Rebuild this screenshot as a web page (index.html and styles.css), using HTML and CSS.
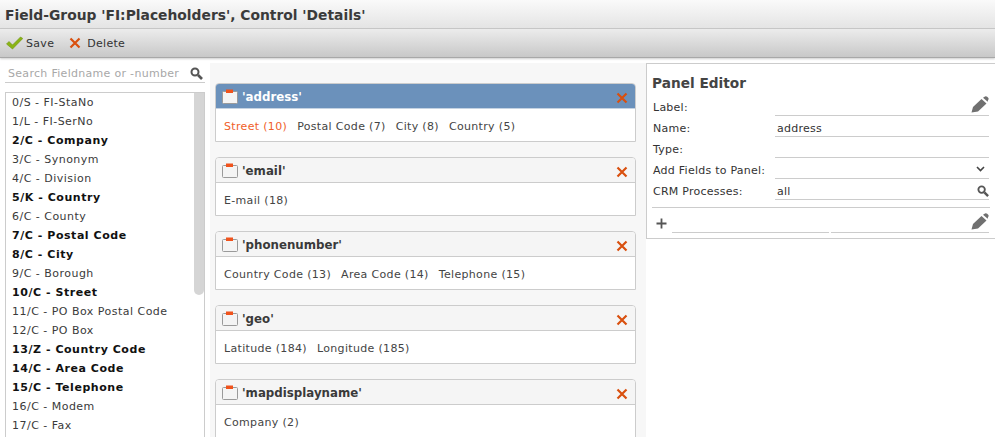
FILE: index.html
```html
<!DOCTYPE html>
<html lang="en">
<head>
    <meta charset="UTF-8">
    <title>Field-Group FI:Placeholders</title>
    <link rel="stylesheet" href="styles.css">
</head>
<body>
    <div class="title-bar">Field-Group 'FI:Placeholders', Control 'Details'</div>

    <div class="toolbar">
        <span class="tool">
            <svg class="tool-icon" width="17" height="14" viewBox="0 0 17 14"><path d="M0.5 8 L3 5.5 L6.5 9 L14.5 1 L16.8 2.5 L6.5 13 Z" fill="#8ab414" stroke="#6f9410" stroke-width="0.6"/></svg>
            Save
        </span>
        <span class="tool delete">
            <svg class="tool-icon" width="12" height="12" viewBox="0 0 12 12"><path d="M1.5 1.5 L10.5 10.5 M10.5 1.5 L1.5 10.5" stroke="#d9500f" stroke-width="2.2"/></svg>
            Delete
        </span>
    </div>

    <div class="main">
        <div class="fields">
            <div class="search">
                <span class="search-text">Search Fieldname or -number</span>
                <svg width="13" height="13" viewBox="0 0 13 13"><circle cx="5" cy="5" r="3.5" fill="none" stroke="#555" stroke-width="2"/><path d="M8 8 L12 12" stroke="#555" stroke-width="2.6"/></svg>
            </div>
            <div class="field-list">
                <div class="scroll-thumb"></div>
                <div class="field">0/S - FI-StaNo</div>
                <div class="field">1/L - FI-SerNo</div>
                <div class="field used">2/C - Company</div>
                <div class="field">3/C - Synonym</div>
                <div class="field">4/C - Division</div>
                <div class="field used">5/K - Country</div>
                <div class="field">6/C - County</div>
                <div class="field used">7/C - Postal Code</div>
                <div class="field used">8/C - City</div>
                <div class="field">9/C - Borough</div>
                <div class="field used">10/C - Street</div>
                <div class="field">11/C - PO Box Postal Code</div>
                <div class="field">12/C - PO Box</div>
                <div class="field used">13/Z - Country Code</div>
                <div class="field used">14/C - Area Code</div>
                <div class="field used">15/C - Telephone</div>
                <div class="field">16/C - Modem</div>
                <div class="field">17/C - Fax</div>
            </div>
        </div>

        <div class="panels">
            <div class="panel selected">
                <div class="panel-head">
                    <svg class="panel-icon" width="16" height="16" viewBox="0 0 16 16"><rect x="0.5" y="2.5" width="15" height="12" rx="1" fill="#f4f4f4" stroke="#9a9a9a"/><rect x="4" y="0.5" width="7" height="3.5" fill="#f0531c"/></svg>
                    <span class="panel-name">'address'</span>
                    <svg class="panel-del" width="12" height="12" viewBox="0 0 12 12"><path d="M1.5 1.5 L10.5 10.5 M10.5 1.5 L1.5 10.5" stroke="#d9500f" stroke-width="2.2"/></svg>
                </div>
                <div class="panel-body"><span class="active">Street (10)</span><span>Postal Code (7)</span><span>City (8)</span><span>Country (5)</span></div>
            </div>
            <div class="panel">
                <div class="panel-head">
                    <svg class="panel-icon" width="16" height="16" viewBox="0 0 16 16"><rect x="0.5" y="2.5" width="15" height="12" rx="1" fill="#f4f4f4" stroke="#9a9a9a"/><rect x="4" y="0.5" width="7" height="3.5" fill="#f0531c"/></svg>
                    <span class="panel-name">'email'</span>
                    <svg class="panel-del" width="12" height="12" viewBox="0 0 12 12"><path d="M1.5 1.5 L10.5 10.5 M10.5 1.5 L1.5 10.5" stroke="#d9500f" stroke-width="2.2"/></svg>
                </div>
                <div class="panel-body"><span>E-mail (18)</span></div>
            </div>
            <div class="panel">
                <div class="panel-head">
                    <svg class="panel-icon" width="16" height="16" viewBox="0 0 16 16"><rect x="0.5" y="2.5" width="15" height="12" rx="1" fill="#f4f4f4" stroke="#9a9a9a"/><rect x="4" y="0.5" width="7" height="3.5" fill="#f0531c"/></svg>
                    <span class="panel-name">'phonenumber'</span>
                    <svg class="panel-del" width="12" height="12" viewBox="0 0 12 12"><path d="M1.5 1.5 L10.5 10.5 M10.5 1.5 L1.5 10.5" stroke="#d9500f" stroke-width="2.2"/></svg>
                </div>
                <div class="panel-body"><span>Country Code (13)</span><span>Area Code (14)</span><span>Telephone (15)</span></div>
            </div>
            <div class="panel">
                <div class="panel-head">
                    <svg class="panel-icon" width="16" height="16" viewBox="0 0 16 16"><rect x="0.5" y="2.5" width="15" height="12" rx="1" fill="#f4f4f4" stroke="#9a9a9a"/><rect x="4" y="0.5" width="7" height="3.5" fill="#f0531c"/></svg>
                    <span class="panel-name">'geo'</span>
                    <svg class="panel-del" width="12" height="12" viewBox="0 0 12 12"><path d="M1.5 1.5 L10.5 10.5 M10.5 1.5 L1.5 10.5" stroke="#d9500f" stroke-width="2.2"/></svg>
                </div>
                <div class="panel-body"><span>Latitude (184)</span><span>Longitude (185)</span></div>
            </div>
            <div class="panel">
                <div class="panel-head">
                    <svg class="panel-icon" width="16" height="16" viewBox="0 0 16 16"><rect x="0.5" y="2.5" width="15" height="12" rx="1" fill="#f4f4f4" stroke="#9a9a9a"/><rect x="4" y="0.5" width="7" height="3.5" fill="#f0531c"/></svg>
                    <span class="panel-name">'mapdisplayname'</span>
                    <svg class="panel-del" width="12" height="12" viewBox="0 0 12 12"><path d="M1.5 1.5 L10.5 10.5 M10.5 1.5 L1.5 10.5" stroke="#d9500f" stroke-width="2.2"/></svg>
                </div>
                <div class="panel-body"><span>Company (2)</span></div>
            </div>
        </div>

        <div class="editor">
            <h2>Panel Editor</h2>
            <div class="editor-row">
                <span class="editor-label">Label:</span>
                <span class="editor-value">
                    <svg class="editor-icon" width="18" height="17" viewBox="0 0 18 17"><path d="M0.5 16.5 L2 11 L10.5 3 L15.5 7.5 L7 15.5 Z M12 1.8 L14 0.4 Q15.2 -0.2 16.2 0.8 L17.4 2 Q18 3 17 4.2 L16.7 5.8 Z" fill="#707070"/></svg>
                </span>
            </div>
            <div class="editor-row">
                <span class="editor-label">Name:</span>
                <span class="editor-value">address</span>
            </div>
            <div class="editor-row">
                <span class="editor-label">Type:</span>
                <span class="editor-value"></span>
            </div>
            <div class="editor-row">
                <span class="editor-label">Add Fields to Panel:</span>
                <span class="editor-value">
                    <svg class="editor-icon chevron" width="9" height="6" viewBox="0 0 9 6"><path d="M1 1 L4.5 4.5 L8 1" fill="none" stroke="#444" stroke-width="1.6"/></svg>
                </span>
            </div>
            <div class="editor-row">
                <span class="editor-label">CRM Processes:</span>
                <span class="editor-value">all
                    <svg class="editor-icon" width="12" height="12" viewBox="0 0 13 13"><circle cx="5" cy="5" r="3.5" fill="none" stroke="#555" stroke-width="2"/><path d="M8 8 L12 12" stroke="#555" stroke-width="2.6"/></svg>
                </span>
            </div>
            <div class="add-row">
                <svg class="plus" width="11" height="11" viewBox="0 0 11 11"><path d="M5.5 0.5 V10.5 M0.5 5.5 H10.5" stroke="#555" stroke-width="1.8"/></svg>
                <span class="add-input"></span>
                <span class="add-input last">
                    <svg class="editor-icon" width="18" height="17" viewBox="0 0 18 17"><path d="M0.5 16.5 L2 11 L10.5 3 L15.5 7.5 L7 15.5 Z M12 1.8 L14 0.4 Q15.2 -0.2 16.2 0.8 L17.4 2 Q18 3 17 4.2 L16.7 5.8 Z" fill="#707070"/></svg>
                </span>
            </div>
        </div>
    </div>
</body>
</html>
```

FILE: styles.css
```css
html, body {
    height: 100%;
}

body {
    margin: 0;
    font-family: "DejaVu Sans", Verdana, sans-serif;
    font-size: 11px;
    color: #333;
    background: #fff;
    display: flex;
    flex-direction: column;
    overflow: hidden;
}

.title-bar {
    height: 29px;
    line-height: 30px;
    padding-left: 5px;
    box-sizing: border-box;
    font-size: 13.85px;
    font-weight: bold;
    color: #3a3a3a;
    white-space: nowrap;
    background: linear-gradient(#fafafa, #e4e4e4);
    border-bottom: 1px solid #c9c9c9;
}

.toolbar {
    height: 29px;
    box-sizing: border-box;
    display: flex;
    align-items: center;
    gap: 15px;
    padding-left: 6px;
    letter-spacing: 0.3px;
    background: linear-gradient(#ececec, #c8c8c8);
    border-bottom: 1px solid #a8a8a8;
    box-shadow: 0 1px 2px rgba(0, 0, 0, 0.2);
    position: relative;
}

.tool {
    display: flex;
    align-items: center;
    gap: 3px;
}

.tool.delete {
    gap: 6px;
}

/* main columns */
.main {
    flex: 1;
    display: flex;
    min-height: 0;
}

.fields {
    width: 205px;
    flex-shrink: 0;
    padding: 8px 0 0 5px;
    box-sizing: border-box;
    display: flex;
    flex-direction: column;
}

.search {
    height: 17px;
    display: flex;
    align-items: center;
    justify-content: space-between;
    padding: 0 2px 1px 3px;
    box-sizing: border-box;
    border-bottom: 1px solid #ccc;
    margin-bottom: 9px;
}

.search-text {
    color: #a8a8a8;
    letter-spacing: 0.3px;
}

.field-list {
    flex: 1;
    position: relative;
    border: 1px solid #ccc;
    border-bottom: none;
    overflow: hidden;
}

.scroll-thumb {
    position: absolute;
    top: 0;
    right: 0;
    width: 10px;
    height: 202px;
    background: #d5d5d5;
    border-radius: 0 0 5px 5px;
}

.field {
    height: 19px;
    line-height: 19px;
    padding-left: 6px;
    color: #3a3a3a;
    letter-spacing: 0.48px;
    white-space: nowrap;
}

.field.used {
    font-weight: bold;
    color: #111;
    letter-spacing: 0.55px;
}

.panels {
    width: 436px;
    flex-shrink: 0;
    box-sizing: border-box;
    margin: 5px 0 0 5px;
    padding: 20px 10px 0 5px;
    background: #f7f7f7;
    display: flex;
    flex-direction: column;
    gap: 15px;
    overflow: hidden;
}

.panel {
    flex-shrink: 0;
    height: 59px;
    box-sizing: border-box;
    border: 1px solid #ccc;
    border-radius: 4px 4px 0 0;
    background: #fff;
}

.panel-head {
    height: 25px;
    box-sizing: border-box;
    display: flex;
    align-items: center;
    padding: 2px 7px 0 6px;
    background: #f5f5f5;
    border-bottom: 1px solid #ccc;
    border-radius: 3px 3px 0 0;
}

.panel-name {
    flex: 1;
    margin-left: 4px;
    font-size: 11.8px;
    font-weight: bold;
    color: #3a3a3a;
}

.panel-del {
    margin-top: 2px;
}

.panel-body {
    height: 33px;
    box-sizing: border-box;
    padding: 2px 0 0 8px;
    display: flex;
    align-items: center;
    gap: 10px;
    color: #444;
    letter-spacing: 0.33px;
}

.panel.selected .panel-head {
    background: #6b91bb;
    border-bottom-color: #c5d3e2;
}

.panel.selected .panel-name {
    color: #fff;
}

.active {
    color: #f0602a;
}

.editor {
    flex: 1;
    align-self: flex-start;
    height: 176px;
    margin-top: 5px;
    box-sizing: border-box;
    padding: 0 5px;
    border: 1px solid #ccc;
    border-right: none;
}

.editor h2 {
    margin: 11px 0 3px;
    font-size: 13.7px;
    line-height: 17px;
    color: #444;
}

.editor-row {
    height: 21px;
    margin-right: 1px;
    display: flex;
    align-items: flex-end;
    letter-spacing: 0.25px;
}

.editor-label {
    width: 122px;
    padding: 0 0 2px 1px;
    flex-shrink: 0;
}

.editor-value {
    flex: 1;
    height: 21px;
    line-height: 26px;
    padding-left: 2px;
    box-sizing: border-box;
    border-bottom: 1px solid #ccc;
    position: relative;
}

.editor-icon {
    position: absolute;
    right: 0;
    bottom: 2px;
}

.chevron {
    right: 4px;
    bottom: 6px;
}

.add-row {
    display: flex;
    align-items: flex-end;
    height: 25px;
    gap: 2px;
    margin-top: 7px;
    border-top: 1px solid #ccc;
}

.plus {
    margin: 0 3px 4px 4px;
}

.add-input {
    width: 157px;
    height: 20px;
    box-sizing: border-box;
    border-bottom: 1px solid #ccc;
    position: relative;
}

.add-input.last {
    flex: 1;
    margin-right: 1px;
}
```
